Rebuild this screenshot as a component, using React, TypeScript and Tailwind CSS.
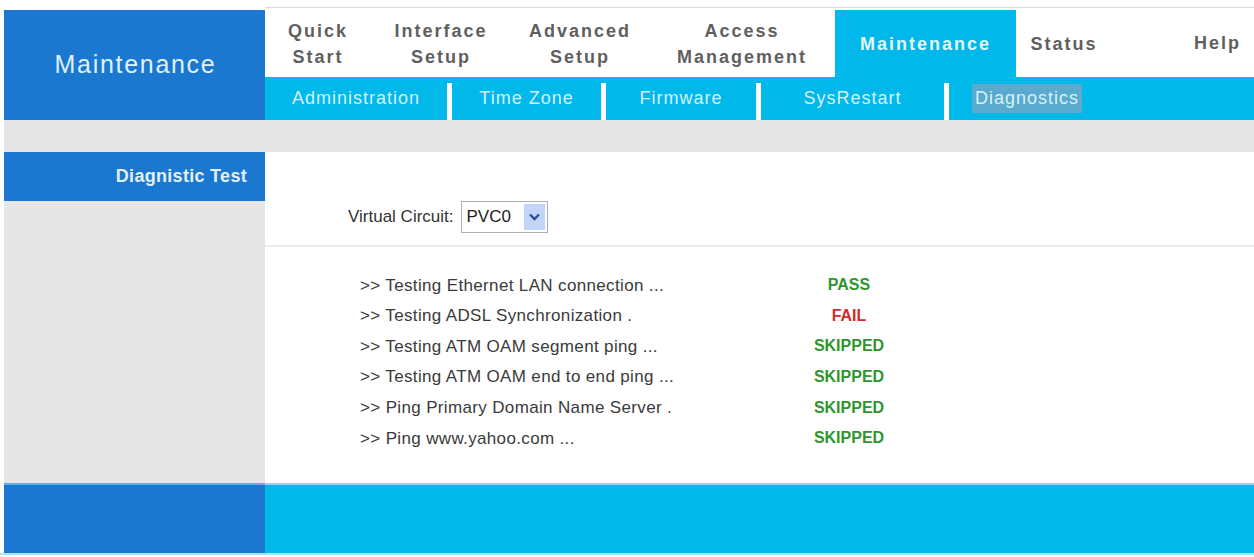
import * as React from 'react';

// top navigation, widths picked so each label sits where the router page has it
const tabs = [
  { lines: ['Quick', 'Start'], width: 'w-[106px]' },
  { lines: ['Interface', 'Setup'], width: 'w-[140px]' },
  { lines: ['Advanced', 'Setup'], width: 'w-[138px]' },
  { lines: ['Access', 'Management'], width: 'w-[186px]' },
  { lines: ['Maintenance'], width: 'w-[181px]', active: true },
  { lines: ['Status'], width: 'w-[96px]' },
];

const subTabs = [
  { label: 'Administration', width: 'w-[182px]' },
  { label: 'Time Zone', width: 'w-[149px]' },
  { label: 'Firmware', width: 'w-[150px]' },
  { label: 'SysRestart', width: 'w-[183px]' },
  { label: 'Diagnostics', width: 'w-[156px]', active: true },
];

const tests = [
  { name: '>> Testing Ethernet LAN connection ...', result: 'PASS' },
  { name: '>> Testing ADSL Synchronization .', result: 'FAIL' },
  { name: '>> Testing ATM OAM segment ping ...', result: 'SKIPPED' },
  { name: '>> Testing ATM OAM end to end ping ...', result: 'SKIPPED' },
  { name: '>> Ping Primary Domain Name Server .', result: 'SKIPPED' },
  { name: '>> Ping www.yahoo.com ...', result: 'SKIPPED' },
];

export default function App() {
  const [circuit, setCircuit] = React.useState('PVC0');

  return (
    <div className="w-[1254px] h-[557px] overflow-hidden bg-white font-['Liberation_Sans',Arial,sans-serif]">
      {/* thin rule above the nav */}
      <div className="h-[10px] pl-[265px] pt-[7px]">
        <div className="h-px bg-[#dcdcdc]" />
      </div>

      {/* header */}
      <div className="flex pl-[4px]">
        <div className="flex h-[110px] w-[261px] items-center justify-center bg-[#1b78d0] pl-[2px] text-[25px] tracking-[1.7px] text-[#dff1fb]">
          Maintenance
        </div>
        <div className="flex flex-1 flex-col">
          <div className="flex h-[67px]">
            {tabs.map((t) => (
              <div
                key={t.lines.join(' ')}
                className={`${t.width} flex flex-col items-center justify-center text-[18px] font-bold leading-[26px] tracking-[2px] ${
                  t.active ? 'bg-[#00b8ea] text-[#e4f5fc]' : 'text-[#5f5f5f]'
                }`}
              >
                {t.lines.map((l) => (
                  <span key={l}>{l}</span>
                ))}
              </div>
            ))}
            <div className="flex flex-1 items-center justify-end pr-[13px] text-[18px] font-bold tracking-[2px] text-[#5f5f5f]">
              Help
            </div>
          </div>
          <div className="flex h-[43px] bg-[#00b8ea]">
            {subTabs.map((s, i) => (
              <React.Fragment key={s.label}>
                {i > 0 && <div className="mt-[6px] w-[5px] bg-white" />}
                <div className={`${s.width} flex items-center justify-center`}>
                  <span
                    className={`text-[18px] tracking-[1px] text-[#d6f1fb] ${
                      s.active ? 'bg-[#5aaacd] px-[3px] py-px' : ''
                    }`}
                  >
                    {s.label}
                  </span>
                </div>
              </React.Fragment>
            ))}
          </div>
        </div>
      </div>

      <div className="ml-[4px] h-[32px] bg-[#e5e5e5]" />

      {/* body */}
      <div className="flex h-[331px] pl-[4px]">
        <div className="flex w-[261px] flex-col bg-[#e6e6e6]">
          <div className="flex h-[49px] items-center justify-end bg-[#1b78d0] pr-[18px] text-[18px] font-bold tracking-[0.3px] text-[#e2f1fb]">
            Diagnistic Test
          </div>
        </div>
        <div className="flex flex-1 flex-col">
          <div className="flex h-[93px] items-end pb-[12px] pl-[83px] text-[17px] text-[#333]">
            <div className="flex items-center">
              <span className="mr-[7px]">Virtual Circuit:</span>
              <div className="relative flex h-[32px] w-[87px] items-center border border-[#a9b0b8] bg-white">
                <select
                  value={circuit}
                  onChange={(e) => setCircuit(e.target.value)}
                  className="h-full w-full appearance-none bg-transparent pl-[5px] text-[17px] text-[#222] outline-none"
                >
                  <option>PVC0</option>
                  <option>PVC1</option>
                  <option>PVC2</option>
                </select>
                <div className="pointer-events-none absolute right-[2px] top-[2px] flex h-[26px] w-[21px] items-center justify-center bg-[#c3d5f7]">
                  <svg width="11" height="8" viewBox="0 0 11 8">
                    <path d="M1 1.5 L5.5 6 L10 1.5" fill="none" stroke="#2d4f9c" strokeWidth="2.4" />
                  </svg>
                </div>
              </div>
            </div>
          </div>
          <div className="h-[2px] bg-[#ebebeb]" />
          <div className="pt-[23px] pl-[95px]">
            {tests.map((t) => (
              <div key={t.name} className="flex h-[30.6px] items-center">
                <span className="w-[419px] text-[17px] tracking-[0.35px] text-[#3a3a3a]">{t.name}</span>
                <span
                  className={`w-[140px] text-center text-[16px] font-bold ${
                    t.result === 'FAIL' ? 'text-[#d42a2a]' : 'text-[#2f952f]'
                  }`}
                >
                  {t.result}
                </span>
              </div>
            ))}
          </div>
        </div>
      </div>

      {/* footer bar */}
      <div className="flex h-[72px] border-b-2 border-[#a6e6f8] pl-[4px]">
        <div className="w-[261px] border-t-2 border-[#5fb0e6] bg-[#1b78d0]" />
        <div className="flex-1 border-t-2 border-[#7fdcf6] bg-[#00b8ea]" />
      </div>
    </div>
  );
}
